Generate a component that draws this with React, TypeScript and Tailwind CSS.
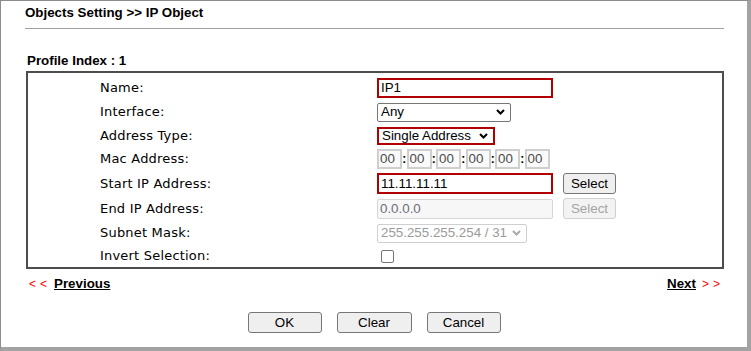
import React from "react";

const labelFont = { fontFamily: '"DejaVu Sans", Verdana, sans-serif' };

function Chevron({ color = "#000" }: { color?: string }) {
  return (
    <svg width="9" height="6" viewBox="0 0 9 6" className="shrink-0">
      <polyline points="1,1 4.5,4.5 8,1" fill="none" stroke={color} strokeWidth="2" />
    </svg>
  );
}

function FakeSelect({
  value,
  width,
  red,
  disabled,
}: {
  value: string;
  width: string;
  red?: boolean;
  disabled?: boolean;
}) {
  const box = red
    ? "border-2 border-[#b00000] h-[18px] pl-[3px] pr-[5px]"
    : disabled
      ? "border border-[#d0d0d0] rounded-[2px] h-[19px] pl-[3px] pr-[5px] text-[#9a9a9a]"
      : "border border-[#767676] rounded-[2px] h-[19px] pl-[3px] pr-[5px]";
  return (
    <div className={`${width} ${box} flex items-center justify-between bg-white`}>
      <span className="leading-none">{value}</span>
      <Chevron color={disabled ? "#a8a8a8" : "#000"} />
    </div>
  );
}

function Btn({ label, w, disabled }: { label: string; w: string; disabled?: boolean }) {
  return (
    <div
      className={`${w} h-[21px] flex items-center justify-center rounded-[3px] border text-[13.33px] ${
        disabled
          ? "border-[#d0d0d0] bg-[#f3f3f3] text-[#a4a4a4]"
          : "border-[#767676] bg-[#efefef] text-black"
      }`}
    >
      {label}
    </div>
  );
}

function Arrows({ ch }: { ch: string }) {
  return (
    <span className="flex gap-[4px] text-[#ff0000] text-[12px]">
      <span>{ch}</span>
      <span>{ch}</span>
    </span>
  );
}

const rows: { label: string; h: string }[] = [
  { label: "Name:", h: "h-[24px]" },
  { label: "Interface:", h: "h-[24px]" },
  { label: "Address Type:", h: "h-[23px]" },
  { label: "Mac Address:", h: "h-[24px]" },
  { label: "Start IP Address:", h: "h-[25px]" },
  { label: "End IP Address:", h: "h-[25px]" },
  { label: "Subnet Mask:", h: "h-[24px]" },
  { label: "Invert Selection:", h: "h-[22px]" },
];

function Field({ index }: { index: number }) {
  switch (index) {
    case 0:
      return (
        <div className="w-[176px] h-[20px] border-2 border-[#b00000] flex items-center pl-[2px] bg-white">
          IP1
        </div>
      );
    case 1:
      return <FakeSelect value="Any" width="w-[134px]" />;
    case 2:
      return <FakeSelect value="Single Address" width="w-[118px]" red />;
    case 3:
      return (
        <div className="flex items-center">
          {["00", "00", "00", "00", "00", "00"].map((v, i) => (
            <React.Fragment key={i}>
              <div className="w-[25px] h-[20px] border-2 border-[#cfcfcf] bg-[#fafafa] flex items-center pl-[1px] text-[#4a4a4a]">
                {v}
              </div>
              {i < 5 && (
                <span className="w-[4.5px] text-center font-bold leading-none text-[12px]">:</span>
              )}
            </React.Fragment>
          ))}
        </div>
      );
    case 4:
      return (
        <div className="flex items-center gap-[10px]">
          <div className="w-[176px] h-[21px] border-2 border-[#b00000] flex items-center pl-[2px] bg-white">
            11.11.11.11
          </div>
          <Btn label="Select" w="w-[53px]" />
        </div>
      );
    case 5:
      return (
        <div className="flex items-center gap-[10px]">
          <div className="w-[176px] h-[20px] border border-[#d6d6d6] rounded-[2px] flex items-center pl-[2px] bg-[#f7f7f7] text-[#6d6d7a]">
            0.0.0.0
          </div>
          <Btn label="Select" w="w-[53px]" disabled />
        </div>
      );
    case 6:
      return <FakeSelect value="255.255.255.254 / 31" width="w-[150px]" disabled />;
    default:
      return (
        <div className="ml-[4px] w-[13px] h-[13px] border border-[#767676] rounded-[2px] bg-white" />
      );
  }
}

export default function App() {
  return (
    <div
      className="w-[751px] h-[351px] bg-white border-l border-t border-l-[#8c8c8c] border-t-[#8c8c8c] border-r-[4px] border-b-[4px] border-r-[#a3a3a3] border-b-[#a3a3a3] text-black"
      style={{ fontFamily: '"Liberation Sans", Arial, sans-serif' }}
    >
      <div className="pl-[24px]">
        <div className="pt-[4px] leading-[16px] text-[13.33px] font-bold">Objects Setting &gt;&gt; IP Object</div>
        <div className="mt-[7px] w-[699px] h-px bg-[#a0a0a0]" />
        <div className="mt-[24px] pl-[2px] leading-[16px] text-[13.33px] font-bold">Profile Index : 1</div>
        <div className="mt-[2px] ml-[1px] w-[698px] h-[198px] border-2 border-[#4d4d4d] pt-[3px]">
          {rows.map((r, i) => (
            <div key={r.label} className={`${r.h} flex items-center`}>
              <div className="w-[349px] pl-[72px] text-[13px] tracking-[0.2px]" style={labelFont}>
                {r.label}
              </div>
              <div className="text-[13.33px]">
                <Field index={i} />
              </div>
            </div>
          ))}
        </div>
        <div className="mt-[7px] ml-[1px] w-[698px] flex justify-between items-center leading-[16px] pl-[3px] pr-[4px]">
          <div className="flex items-center">
            <Arrows ch="<" />
            <span className="ml-[7px] text-[13.33px] font-bold underline">Previous</span>
          </div>
          <div className="flex items-center">
            <span className="text-[13.33px] font-bold underline">Next</span>
            <span className="ml-[6px]">
              <Arrows ch=">" />
            </span>
          </div>
        </div>
      </div>
      <div className="mt-[20px] flex justify-center gap-[15px]">
        <Btn label="OK" w="w-[74px]" />
        <Btn label="Clear" w="w-[75px]" />
        <Btn label="Cancel" w="w-[74px]" />
      </div>
    </div>
  );
}
